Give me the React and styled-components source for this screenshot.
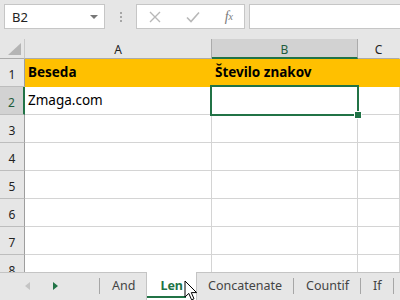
import React from 'react'
import styled, { createGlobalStyle } from 'styled-components'

const GlobalStyle = createGlobalStyle`
  html, body { margin: 0; padding: 0; }
  body { background: #e6e6e6; }
  * { box-sizing: border-box; }
`

const green = '#217346'

const App = () => {
  const rows = [1, 2, 3, 4, 5, 6, 7, 8]
  return (
    <Window>
      <GlobalStyle />
      <FormulaBar>
        <NameBox>
          <span>B2</span>
          <DropArrow />
        </NameBox>
        <Grip>
          <i /><i /><i />
        </Grip>
        <ButtonsBox>
          <svg width="12" height="12" viewBox="0 0 12 12">
            <path d="M1 1 L11 11 M11 1 L1 11" stroke="#b8b8b8" strokeWidth="1.4" fill="none" />
          </svg>
          <svg width="14" height="12" viewBox="0 0 14 12">
            <path d="M1 6.5 L5 10.5 L13 1.5" stroke="#b8b8b8" strokeWidth="1.6" fill="none" />
          </svg>
          <Fx>f<sub>x</sub></Fx>
        </ButtonsBox>
        <FormulaInput />
      </FormulaBar>

      <Sheet>
        <Corner>
          <svg width="14" height="12" viewBox="0 0 14 12">
            <path d="M13 0 L13 12 L0 12 Z" fill="#b4b4b4" />
          </svg>
        </Corner>
        <ColHead>A</ColHead>
        <ColHead selected>B</ColHead>
        <ColHead last>C</ColHead>

        {rows.map((r) => (
          <React.Fragment key={r}>
            <RowHead selected={r === 2}>{r}</RowHead>
            {r === 1 ? (
              <>
                <Cell fill bold>Beseda</Cell>
                <Cell fill bold>Število znakov</Cell>
                <Cell fill />
              </>
            ) : r === 2 ? (
              <>
                <Cell>Zmaga.com</Cell>
                <Cell active>
                  <Selection />
                  <Handle />
                </Cell>
                <Cell />
              </>
            ) : (
              <>
                <Cell />
                <Cell />
                <Cell />
              </>
            )}
          </React.Fragment>
        ))}
      </Sheet>

      <TabBar>
        <Nav>
          <svg width="6" height="8" viewBox="0 0 6 8">
            <path d="M5 0 L5 8 L0 4 Z" fill="#c4c4c4" />
          </svg>
          <svg width="6" height="8" viewBox="0 0 6 8">
            <path d="M0 0 L0 8 L5 4 Z" fill={green} />
          </svg>
        </Nav>
        <Tab>And</Tab>
        <Tab active>Len</Tab>
        <Tab>Concatenate</Tab>
        <Tab>Countif</Tab>
        <Tab>If</Tab>
        <Pointer width="14" height="22" viewBox="0 0 14 22">
          <path d="M1 1 L1 17 L4.8 13.4 L7.6 19.8 L10 18.8 L7.3 12.6 L12.6 12.6 Z" fill="#fff" stroke="#000" strokeWidth="1" strokeLinejoin="round" />
        </Pointer>
      </TabBar>
    </Window>
  )
}

export default App

const Window = styled.div`
  width: 400px;
  height: 300px;
  overflow: hidden;
  display: flex;
  flex-direction: column;
  background: #e6e6e6;
  position: relative;
  font-family: "Noto Sans", "Open Sans", sans-serif;
`

const FormulaBar = styled.div`
  height: 39px;
  flex: none;
  display: flex;
  align-items: flex-start;
  padding: 4px 0 0 4px;
`

const NameBox = styled.div`
  width: 101px;
  height: 25px;
  background: #fff;
  border: 1px solid #c6c6c6;
  display: flex;
  align-items: center;
  justify-content: space-between;
  padding: 0 6px 0 7px;
  font-size: 13px;
  color: #222;
`

const DropArrow = styled.span`
  width: 0;
  height: 0;
  border-left: 4px solid transparent;
  border-right: 4px solid transparent;
  border-top: 4px solid #777;
`

const Grip = styled.div`
  width: 31px;
  height: 25px;
  display: flex;
  flex-direction: column;
  align-items: center;
  justify-content: center;
  gap: 2px;
  i {
    width: 2px;
    height: 2px;
    background: #a6a6a6;
    display: block;
  }
`

const ButtonsBox = styled.div`
  width: 109px;
  height: 25px;
  background: #fff;
  border: 1px solid #c6c6c6;
  display: flex;
  align-items: center;
  justify-content: space-between;
  padding: 0 11px 0 12px;
`

const Fx = styled.span`
  font-family: "Liberation Serif", serif;
  font-style: italic;
  font-size: 14px;
  color: #7a7a7a;
  sub {
    font-size: 10px;
    vertical-align: 1px;
  }
`

const FormulaInput = styled.div`
  flex: 1;
  height: 25px;
  margin-left: 4px;
  background: #fff;
  border: 1px solid #c6c6c6;
  border-right: none;
`

const Sheet = styled.div`
  flex: 1;
  display: grid;
  grid-template-columns: 25px 187px 146px 1fr;
  grid-template-rows: 20px repeat(8, 28px);
  background: #fff;
  overflow: hidden;
  min-height: 0;
`

const Corner = styled.div`
  background: #e6e6e6;
  border-right: 1px solid #c8c8c8;
  border-bottom: 1px solid #ababab;
  display: flex;
  align-items: flex-end;
  justify-content: flex-end;
  padding: 0 2px 3px 0;
`

const ColHead = styled.div`
  background: ${(p) => (p.selected ? '#d2d2d2' : '#e6e6e6')};
  border-right: 1px solid ${(p) => (p.last ? 'transparent' : '#ababab')};
  border-bottom: ${(p) => (p.selected ? `2px solid ${green}` : '1px solid #ababab')};
  display: flex;
  align-items: center;
  justify-content: center;
  font-size: 12px;
  color: ${(p) => (p.selected ? '#1e5c3c' : '#222')};
  padding-top: ${(p) => (p.selected ? '3px' : '2px')};
`

const RowHead = styled.div`
  background: ${(p) => (p.selected ? '#d2d2d2' : '#e6e6e6')};
  border-right: ${(p) => (p.selected ? `2px solid ${green}` : '1px solid #9e9e9e')};
  border-bottom: 1px solid #bdbdbd;
  display: flex;
  align-items: flex-end;
  justify-content: center;
  padding-bottom: 3px;
  font-size: 12px;
  color: ${(p) => (p.selected ? '#1e5c3c' : '#222')};
`

const Cell = styled.div`
  position: relative;
  z-index: ${(p) => (p.active ? 2 : 0)};
  background: ${(p) => (p.fill ? '#ffc000' : '#fff')};
  border-right: 1px solid ${(p) => (p.fill ? '#ffc000' : '#d4d4d4')};
  border-bottom: 1px solid ${(p) => (p.fill ? '#ffc000' : '#d4d4d4')};
  display: flex;
  align-items: flex-end;
  padding: 0 3px 5px;
  font-size: 13.5px;
  font-weight: ${(p) => (p.bold ? 700 : 400)};
  color: #000;
  white-space: nowrap;
`

const Selection = styled.div`
  position: absolute;
  left: -2px;
  top: -2px;
  right: -2px;
  bottom: -2px;
  border: 2px solid ${green};
`

const Handle = styled.div`
  position: absolute;
  right: -4px;
  bottom: -4px;
  width: 6px;
  height: 6px;
  background: ${green};
  outline: 1px solid #fff;
`

const TabBar = styled.div`
  height: 28px;
  flex: none;
  display: flex;
  align-items: stretch;
  border-top: 1px solid #c4c4c4;
  background: #e6e6e6;
  position: relative;
`

const Nav = styled.div`
  width: 100px;
  display: flex;
  align-items: center;
  padding-left: 25px;
  gap: 22px;
  border-right: 1px solid #a6a6a6;
  margin: 5px 0 6px;
`

const Tab = styled.div`
  position: relative;
  display: flex;
  align-items: center;
  padding: 0 ${(p) => (p.active ? '13px' : '12px')} 2px;
  margin-top: ${(p) => (p.active ? '-1px' : '0')};
  font-size: 12.5px;
  font-weight: ${(p) => (p.active ? 700 : 400)};
  color: ${(p) => (p.active ? green : '#444')};
  background: ${(p) => (p.active ? '#fff' : 'transparent')};
  box-shadow: ${(p) => (p.active ? '-1px 0 0 #c4c4c4, 1px 0 0 #c4c4c4' : 'none')};
  &::after {
    content: '';
    position: absolute;
    right: 0;
    top: 5px;
    bottom: 6px;
    width: 1px;
    background: ${(p) => (p.active ? 'transparent' : '#a6a6a6')};
  }
  &::before {
    content: '';
    display: ${(p) => (p.active ? 'block' : 'none')};
    position: absolute;
    left: 0;
    right: 10px;
    bottom: 2px;
    height: 2px;
    background: ${green};
  }
`

const Pointer = styled.svg`
  position: absolute;
  left: 184px;
  top: 7px;
`
